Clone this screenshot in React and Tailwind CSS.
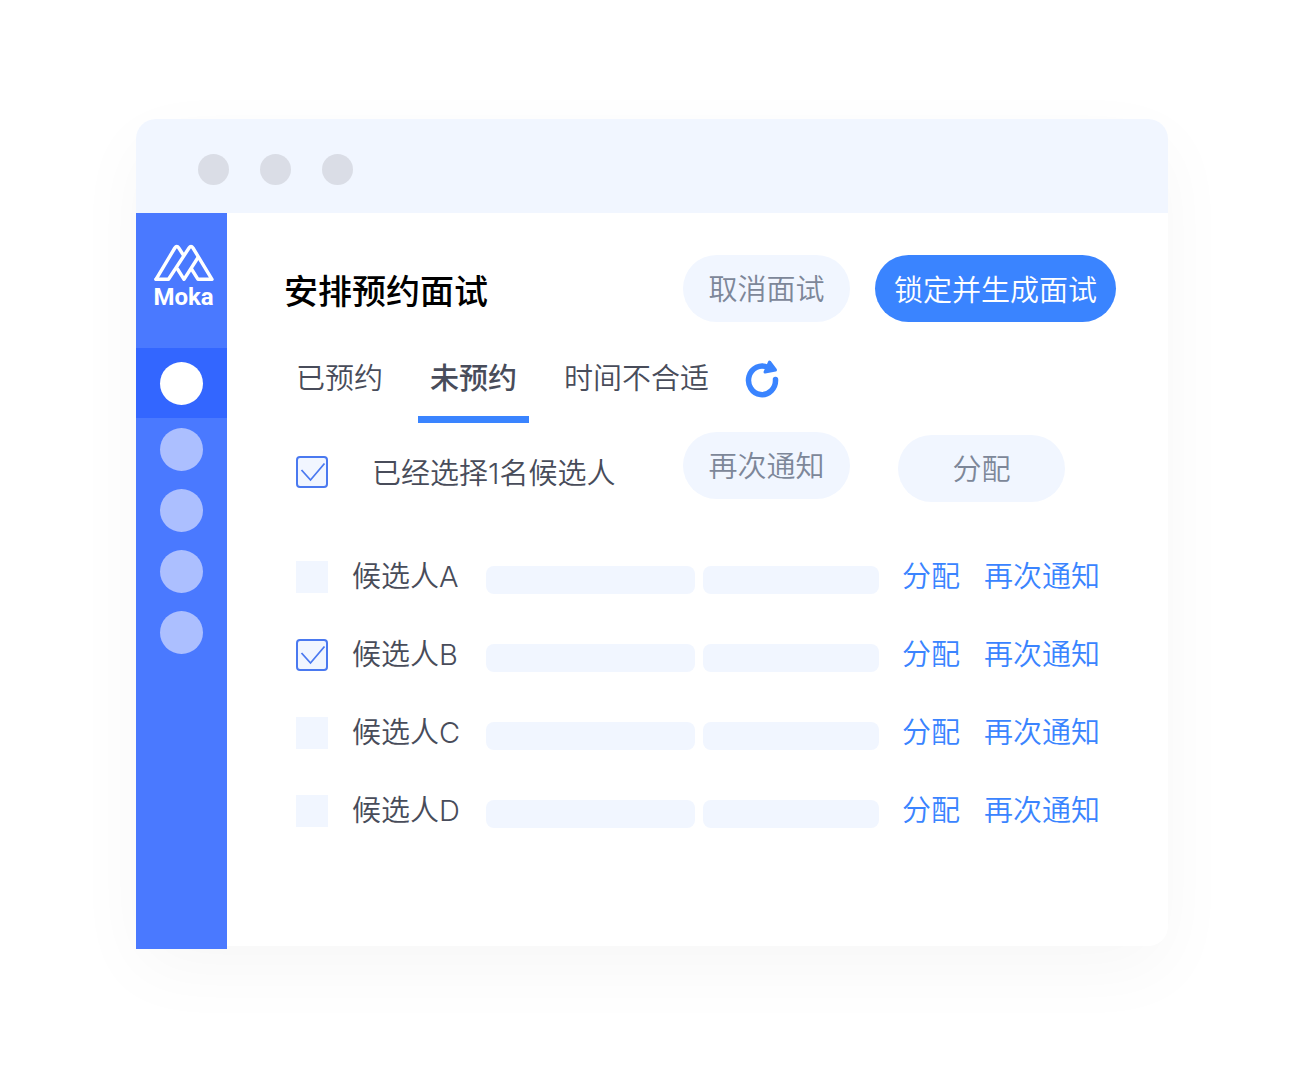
import { useState } from 'react'

const candidates = [
  { id: 'a', name: '候选人A' },
  { id: 'b', name: '候选人B' },
  { id: 'c', name: '候选人C' },
  { id: 'd', name: '候选人D' },
]

const tabs = ['已预约', '未预约', '时间不合适']

function MokaLogo() {
  return (
    <div className="flex flex-col items-center text-white">
      <svg width="60" height="38" viewBox="0 0 60 38" fill="none" stroke="currentColor" strokeWidth="3.400"
        strokeLinejoin="round" strokeLinecap="round" aria-hidden="true">
        <path d="M2 35.300 L20.800 4 Q22.800 1 24.800 4 L29 10.500" />
        <path d="M2 35.300 H14.500 L35 4 Q37 1 39 4 L58 35.300 H44 L37.500 25" />
        <path d="M23.500 25 L30 35.300 L44 13.500" />
      </svg>
      <span className="font-['Roboto',sans-serif] text-2xl leading-[30px] font-bold">Moka</span>
    </div>
  )
}

function Checkbox({ checked, onChange, label }) {
  return (
    <span className="relative block size-8 shrink-0">
      <input type="checkbox" checked={checked} onChange={onChange} aria-label={label}
        className="block size-8 appearance-none bg-[#f1f6ff] checked:rounded-[4px] checked:border-2 checked:border-[#4a79f0]" />
      {checked && (
        <svg className="pointer-events-none absolute inset-0" width="32" height="32" viewBox="0 0 32 32"
          fill="none" stroke="#4a79f0" strokeWidth="1.800" aria-hidden="true">
          <path d="M5.500 14 L14.500 24 L28.500 7.500" />
        </svg>
      )}
    </span>
  )
}

function PillButton({ children, className = '' }) {
  return (
    <button type="button" className={`h-[67px] w-[167px] rounded-full bg-[#f1f6ff] pt-[2px] text-[#7d8799] ${className}`}>
      {children}
    </button>
  )
}

function RefreshIcon() {
  return (
    <svg width="36" height="38" viewBox="0 0 36 38" fill="none" aria-hidden="true">
      <path d="M31.500 19.500 A13.500 14.300 0 1 1 24 7.500" stroke="#3a84ff" strokeWidth="5.500" strokeLinecap="round" />
      <path d="M25.500 2 L31.500 10 L21 12 Z" fill="#3a84ff" stroke="#3a84ff" strokeWidth="3" strokeLinejoin="round" />
    </svg>
  )
}

export default function App() {
  const [activeTab, setActiveTab] = useState('未预约')
  const [selected, setSelected] = useState(['b'])

  function toggle(id) {
    setSelected(prev => (prev.includes(id) ? prev.filter(x => x !== id) : [...prev, id]))
  }

  function toggleAll() {
    setSelected(prev => (prev.length ? [] : candidates.map(c => c.id)))
  }

  return (
    <div className="bg-white px-[136px] py-[119px] font-['Inter','Noto_Sans_CJK_SC',sans-serif] text-[29px] leading-10 font-[350] text-[#484c5a]">
      <div className="rounded-[20px] bg-white shadow-[0_24px_72px_rgba(0,0,0,0.035)]">
        <div className="flex h-[94px] items-center gap-[31px] rounded-t-[20px] bg-[#f1f6ff] pt-[6px] pl-[62px]">
          <span className="size-[31px] rounded-full bg-[#dadde6]" />
          <span className="size-[31px] rounded-full bg-[#dadde6]" />
          <span className="size-[31px] rounded-full bg-[#dadde6]" />
        </div>

        <div className="flex">
          <nav className="-mb-[3px] w-[91px] shrink-0 bg-[#4a79ff]">
            <div className="h-[135px] pt-[31px] pl-1">
              <MokaLogo />
            </div>
            <div className="flex h-[70px] items-center justify-center bg-[#3366ff]">
              <button type="button" aria-label="1" className="size-[43px] rounded-full bg-white" />
            </div>
            <div className="flex flex-col items-center gap-[18px] pt-[10px]">
              <button type="button" aria-label="2" className="size-[43px] rounded-full bg-[#acbfff]" />
              <button type="button" aria-label="3" className="size-[43px] rounded-full bg-[#acbfff]" />
              <button type="button" aria-label="4" className="size-[43px] rounded-full bg-[#acbfff]" />
              <button type="button" aria-label="5" className="size-[43px] rounded-full bg-[#acbfff]" />
            </div>
          </nav>

          <main className="min-w-0 flex-1 pt-[42px] pr-[52px] pb-24 pl-[57px]">
            <header className="flex items-center gap-[25px]">
              <h1 className="mr-auto pt-[6px] text-[34px] font-medium text-black">安排预约面试</h1>
              <PillButton>取消面试</PillButton>
              <button type="button" className="h-[67px] w-[241px] rounded-full bg-[#3a84ff] pt-1 text-white">锁定并生成面试</button>
            </header>

            <div className="mt-9 flex items-start gap-[23px]">
              {tabs.map(tab => (
                <button key={tab} type="button" onClick={() => setActiveTab(tab)}
                  className={tab === activeTab
                    ? 'h-[65px] border-b-[7px] border-[#3a84ff] px-3 pb-4 font-medium'
                    : 'h-[65px] px-3 pb-[23px]'}>
                  {tab}
                </button>
              ))}
              <button type="button" aria-label="刷新" className="pt-[2px]">
                <RefreshIcon />
              </button>
            </div>

            <div className="mt-[9px] flex h-[70px] pl-3">
              <label className="mr-auto flex h-[60px] items-center gap-11 self-end">
                <Checkbox checked={selected.length > 0} onChange={toggleAll} label="全选" />
                <span className="pt-1">已经选择{selected.length}名候选人</span>
              </label>
              <PillButton className="self-start">再次通知</PillButton>
              <PillButton className="mr-[51px] ml-12 self-end">分配</PillButton>
            </div>

            <ul className="mt-9">
              {candidates.map(c => (
                <li key={c.id} className="flex h-[78px] items-center pr-4 pl-3">
                  <label className="flex w-[190px] shrink-0 items-center gap-6">
                    <Checkbox checked={selected.includes(c.id)} onChange={() => toggle(c.id)} label={c.name} />
                    <span>{c.name}</span>
                  </label>
                  <div className="mt-[6px] mr-[23px] flex flex-1 gap-2">
                    <span className="h-7 flex-[210] rounded-lg bg-[#f1f6ff]" />
                    <span className="h-7 flex-[176] rounded-lg bg-[#f1f6ff]" />
                  </div>
                  <div className="flex gap-6 text-[#3a84ff]">
                    <a href="#assign">分配</a>
                    <a href="#notify">再次通知</a>
                  </div>
                </li>
              ))}
            </ul>
          </main>
        </div>
      </div>
    </div>
  )
}
